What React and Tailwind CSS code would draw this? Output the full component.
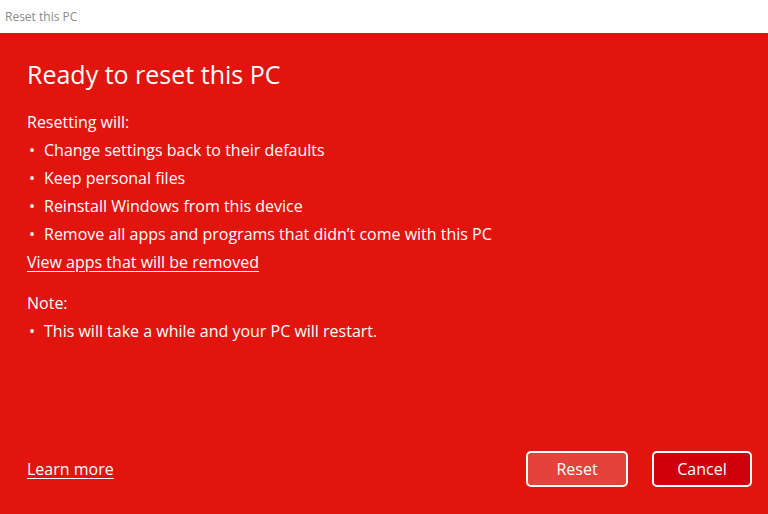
const items = [
  'Change settings back to their defaults',
  'Keep personal files',
  'Reinstall Windows from this device',
  'Remove all apps and programs that didn\u2019t come with this PC',
]

function Bullet({ children }) {
  return (
    <div className="flex h-[28px] items-center">
      <span className="w-[17px] pl-[2px] text-[16px]">•</span>
      <span>{children}</span>
    </div>
  )
}

export default function App() {
  return (
    <div className="flex h-[514px] w-[768px] flex-col overflow-hidden bg-white font-['Open_Sans',sans-serif]">
      <div className="flex h-[33px] items-center pl-[5px] text-[12px] text-[#8a8a8a]">
        Reset this PC
      </div>
      <div className="flex flex-1 flex-col bg-[#e1140e] px-[27px] pt-[23px] pb-[27px] text-[16px] text-white">
        <h1 className="h-[36px] text-[25px] leading-[36px] font-normal">Ready to reset this PC</h1>
        <div className="mt-[16px] flex h-[28px] items-center">Resetting will:</div>
        {items.map((t) => (
          <Bullet key={t}>{t}</Bullet>
        ))}
        <div className="flex h-[28px] items-center">
          <a className="underline underline-offset-[3px]" href="#">View apps that will be removed</a>
        </div>
        <div className="mt-[13px] flex h-[28px] items-center">Note:</div>
        <Bullet>This will take a while and your PC will restart.</Bullet>
        <div className="flex-1" />
        <div className="-mr-[11px] flex items-center justify-between">
          <a className="underline underline-offset-[3px]" href="#">Learn more</a>
          <div className="flex gap-[24px]">
            <button className="h-[36px] w-[102px] rounded-[5px] border-2 border-white bg-[#e5423c] text-[16px] text-white">
              Reset
            </button>
            <button className="h-[36px] w-[100px] rounded-[5px] border-2 border-white bg-[#cf000c] text-[16px] text-white">
              Cancel
            </button>
          </div>
        </div>
      </div>
    </div>
  )
}
